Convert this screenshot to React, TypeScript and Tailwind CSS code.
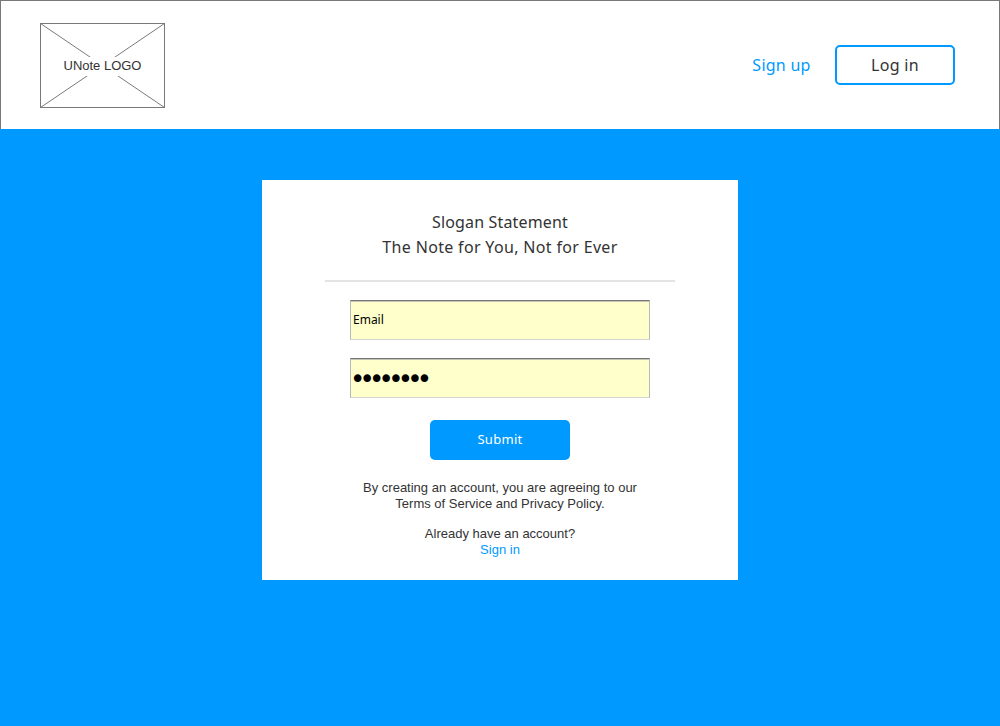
const fieldClass =
  'block h-10 w-[300px] border border-t-[#767676] border-x-[#b8b8b8] border-b-[#d4d4d4] bg-[#ffffcc] text-black shadow-[inset_0_1px_0_#c4c4b4] outline-none';

function Logo() {
  return (
    <div className="grid h-[85px] w-[125px] place-items-center">
      <svg className="col-start-1 row-start-1" width="125" height="85" viewBox="0 0 125 85" fill="none" stroke="#797979">
        <rect x="0.5" y="0.5" width="124" height="84" />
        <path d="M0.5 0.5L124.5 84.5M124.5 0.5L0.5 84.5" />
      </svg>
      <span className="z-10 col-start-1 row-start-1 mt-0.5 bg-white px-0.5 pt-px pb-[3px] text-[13px] leading-[15px] tracking-[-0.02px] text-[#333]">
        UNote LOGO
      </span>
    </div>
  );
}

function Header() {
  return (
    <header className="flex h-[129px] items-start justify-between border border-b-0 border-[#797979] bg-white pr-11 pl-[39px]">
      <div className="pt-[22px]">
        <Logo />
      </div>
      <nav className="flex items-center pt-11 font-['Noto_Sans',sans-serif] text-[16px]">
        <a className="mr-6 w-[59px] text-center tracking-[0.25px] whitespace-nowrap text-[#0099ff]">Sign up</a>
        <button className="h-10 w-[120px] rounded-[5px] border-2 border-[#0099ff] bg-white tracking-[0.3px] text-[#333]">
          Log in
        </button>
      </nav>
    </header>
  );
}

export default function App() {
  return (
    <div className="min-h-[726px] bg-[#0099ff] font-['Liberation_Sans',Arial,sans-serif] text-[#333]">
      <Header />
      <main className="mx-auto mt-[51px] flex h-[400px] w-[476px] flex-col items-center bg-white pt-[30px]">
        <h1 className="text-center font-['Noto_Sans',sans-serif] text-[16px] leading-[25px]">
          <span className="block tracking-[0.15px]">Slogan Statement</span>
          <span className="block tracking-[0.33px]">The Note for You, Not for Ever</span>
        </h1>
        <hr className="mt-5 w-[350px] border-t-2 border-[#e4e4e4]" />
        <form className="mt-[18px] flex flex-col items-center">
          <input
            className={`${fieldClass} pb-0.5 pl-0.5 font-['Noto_Sans',sans-serif] text-[12px]`}
            defaultValue="Email"
          />
          <input
            type="password"
            className={`${fieldClass} mt-[18px] pt-0.5 pl-0 indent-[-1px] font-['DejaVu_Sans',sans-serif] text-[26px] tracking-[-5.8px]`}
            defaultValue="password"
          />
          <button
            type="button"
            className="mt-[22px] h-10 w-[140px] rounded-[5px] bg-[#0099ff] font-['Noto_Sans',sans-serif] text-[13px] tracking-[0.3px] text-white"
          >
            Submit
          </button>
        </form>
        <p className="mt-5 text-center text-[13px] leading-4">
          By creating an account, you are agreeing to our
          <br />
          Terms of Service and Privacy Policy.
        </p>
        <p className="mt-3.5 text-center text-[13px] leading-4">
          Already have an account?
          <br />
          <a className="text-[#0099ff]">Sign in</a>
        </p>
      </main>
    </div>
  );
}
